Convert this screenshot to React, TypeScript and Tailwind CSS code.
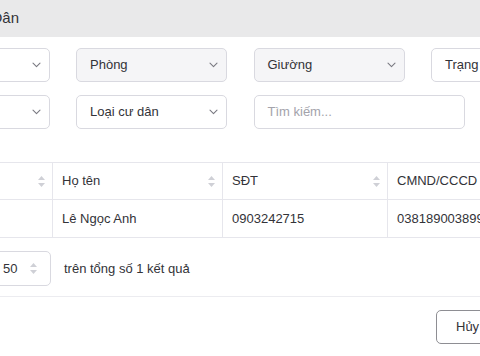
import React from "react";

const Chevron = () => (
  <svg width="9" height="6" viewBox="0 0 9 6" fill="none">
    <path d="M1 1.2 L4.5 4.6 L8 1.2" stroke="#7a7a82" strokeWidth="1.1" strokeLinecap="round" strokeLinejoin="round" />
  </svg>
);

const Sort = () => (
  <svg width="9" height="13" viewBox="0 0 9 13" fill="#cfd0d6">
    <path d="M4.5 1 L8 5 L1 5 Z" />
    <path d="M4.5 12 L8 8 L1 8 Z" />
  </svg>
);

const Select = ({ label, disabled }: { label: string; disabled?: boolean }) => (
  <div
    className={`w-[151px] h-[34px] shrink-0 rounded-[5px] border border-[#d9d9e0] flex items-center justify-between pl-[13px] pr-[8px] ${
      disabled ? "bg-[#f5f5f7]" : "bg-white"
    }`}
  >
    <span className="text-[#333338] whitespace-nowrap">{label}</span>
    <Chevron />
  </div>
);

export default function App() {
  return (
    <div className="w-[480px] h-[356px] overflow-hidden bg-white font-['Liberation_Sans',Arial,sans-serif] text-[13px] text-[#333338]">
      <div className="h-[37px] bg-[#e9e9ea] flex items-center pb-[1px]">
        <div className="w-[19px] flex justify-end whitespace-nowrap text-[15px] text-[#333338]">
          Chọn Cư Dân
        </div>
      </div>

      <div className="mt-[11px] ml-[-101.5px] flex gap-[26.5px]">
        <Select label="Tòa nhà" />
        <Select label="Phòng" disabled />
        <Select label="Giường" disabled />
        <div className="w-[151px] h-[34px] shrink-0 rounded-[5px] border border-[#d9d9e0] bg-white flex items-center pl-[13px]">
          <span className="whitespace-nowrap">Trạng thái</span>
        </div>
      </div>

      <div className="mt-[13px] ml-[-101.5px] flex gap-[26.5px]">
        <Select label="Giới tính" />
        <Select label="Loại cư dân" />
        <div className="w-[211px] h-[34px] shrink-0 rounded-[5px] border border-[#d9d9e0] bg-white flex items-center pl-[13px]">
          <span className="text-[#a3a3ab] whitespace-nowrap">Tìm kiếm...</span>
        </div>
      </div>

      <div className="mt-[33px] ml-[-118px] border-t border-[#e6e6ec]">
        <div className="flex h-[37px] border-b border-[#e6e6ec]">
          <div className="w-[171px] shrink-0 border-r border-[#e6e6ec] flex items-center justify-between pl-[10px] pr-[6px]">
            <span>Mã cư dân</span>
            <Sort />
          </div>
          <div className="w-[170px] shrink-0 border-r border-[#e6e6ec] flex items-center justify-between pl-[9px] pr-[6px]">
            <span>Họ tên</span>
            <Sort />
          </div>
          <div className="w-[165px] shrink-0 border-r border-[#e6e6ec] flex items-center justify-between pl-[9px] pr-[6px]">
            <span>SĐT</span>
            <Sort />
          </div>
          <div className="w-[200px] shrink-0 flex items-center pl-[9px] whitespace-nowrap">
            <span>CMND/CCCD</span>
          </div>
        </div>
        <div className="flex h-[38px] border-b border-[#e6e6ec]">
          <div className="w-[171px] shrink-0 border-r border-[#e6e6ec] flex items-center pl-[10px]">
            <span></span>
          </div>
          <div className="w-[170px] shrink-0 border-r border-[#e6e6ec] flex items-center pl-[9px]">
            <span className="whitespace-nowrap">Lê Ngọc Anh</span>
          </div>
          <div className="w-[165px] shrink-0 border-r border-[#e6e6ec] flex items-center pl-[9px]">
            <span>0903242715</span>
          </div>
          <div className="w-[200px] shrink-0 flex items-center pl-[9px] whitespace-nowrap">
            <span>038189003899</span>
          </div>
        </div>
      </div>

      <div className="mt-[13px] flex items-center gap-[13px] ml-[-20px] pb-[10px] border-b border-[#ececf0]">
        <div className="w-[71px] h-[35px] rounded-[5px] border border-[#d9d9e0] flex items-center justify-between pl-[22px] pr-[12px]">
          <span>50</span>
          <Sort />
        </div>
        <span className="whitespace-nowrap">trên tổng số 1 kết quả</span>
      </div>

      <div className="mt-[13px] ml-[436px]">
        <div className="w-[80px] h-[34px] rounded-[5px] border border-[#8e8e93] flex items-center pl-[19px]">
          <span>Hủy</span>
        </div>
      </div>
    </div>
  );
}
